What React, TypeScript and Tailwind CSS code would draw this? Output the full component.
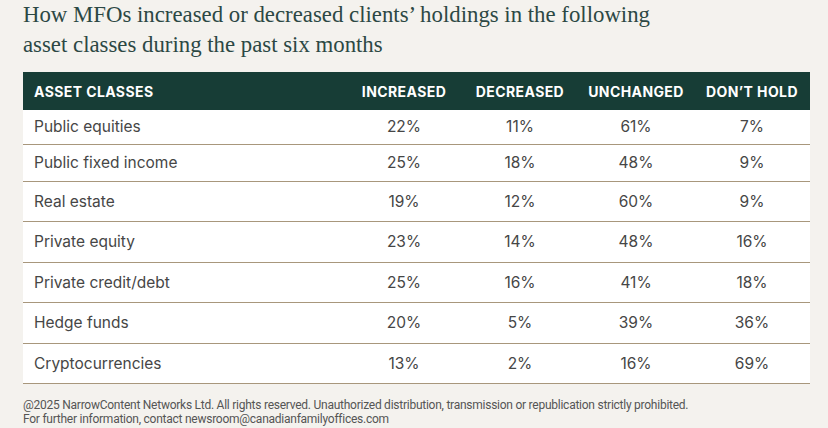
const rows = [
  { name: "Public equities", v: ["22%", "11%", "61%", "7%"], h: "h-[35px]" },
  { name: "Public fixed income", v: ["25%", "18%", "48%", "9%"], h: "h-[37px]" },
  { name: "Real estate", v: ["19%", "12%", "60%", "9%"], h: "h-[40px]" },
  { name: "Private equity", v: ["23%", "14%", "48%", "16%"], h: "h-[41px]" },
  { name: "Private credit/debt", v: ["25%", "16%", "41%", "18%"], h: "h-[40px]" },
  { name: "Hedge funds", v: ["20%", "5%", "39%", "36%"], h: "h-[41px]" },
  { name: "Cryptocurrencies", v: ["13%", "2%", "16%", "69%"], h: "h-[40px]" },
];

const heads = ["INCREASED", "DECREASED", "UNCHANGED", "DON\u2019T HOLD"];

export default function App() {
  return (
    <div className="w-[828px] h-[428px] overflow-hidden bg-[#f4f2ee] pl-[23px]">
      <h1 className="font-['Liberation_Serif',serif] text-[22.8px] leading-[30px] text-[#2c4844] w-[640px]">
        How MFOs increased or decreased clients’ holdings in the following asset classes during the past six months
      </h1>

      <div className="mt-[12px] w-[787px] font-['Inter',sans-serif]">
        <div className="flex h-[38px] items-center bg-[#173d36] text-white font-bold text-[14px] tracking-[0.4px]">
          <div className="w-[323px] pl-[11px]">ASSET CLASSES</div>
          {heads.map((h) => (
            <div key={h} className="w-[116px] text-center">
              {h}
            </div>
          ))}
        </div>
        {rows.map((r) => (
          <div
            key={r.name}
            className={`flex items-center bg-white border-b border-[#a8977c] text-[15.5px] text-[#464646] ${r.h}`}
          >
            <div className="w-[323px] pl-[11px]">{r.name}</div>
            {r.v.map((x, i) => (
              <div key={i} className="w-[116px] text-center">
                {x}
              </div>
            ))}
          </div>
        ))}
      </div>

      <div className="mt-[14px] font-['Roboto',sans-serif] text-[12px] leading-[14px] text-[#555] tracking-[-0.25px]">
        <p>
          @2025 NarrowContent Networks Ltd. All rights reserved. Unauthorized distribution, transmission or republication strictly prohibited.
        </p>
        <p>For further information, contact newsroom@canadianfamilyoffices.com</p>
      </div>
    </div>
  );
}
